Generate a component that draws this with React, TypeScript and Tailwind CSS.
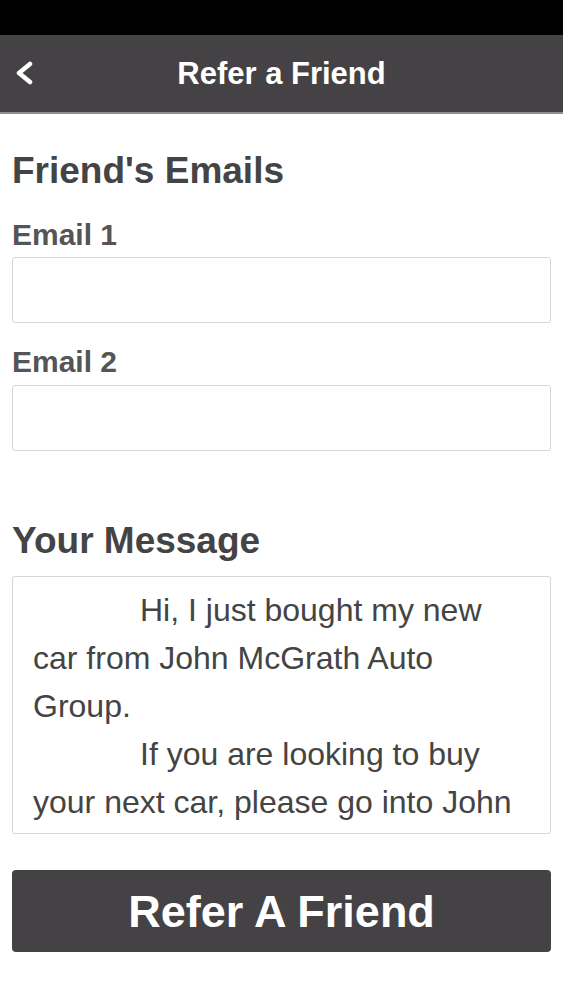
export default function App(): JSX.Element {
  return (
    <main className="w-[563px] h-[1000px] bg-white font-['Liberation_Sans',Arial,sans-serif] overflow-hidden">
      <div className="h-[35px] bg-black" />
      <header className="h-[79px] bg-[#444245] border-b-2 border-[#8e8d8f] flex items-center">
        <div className="w-[70px] pl-[15px] flex items-center">
          <svg width="20" height="26" viewBox="0 0 20 26" fill="none">
            <polyline points="15,3 4,12 15,21" stroke="white" strokeWidth="4.5" strokeLinecap="round" strokeLinejoin="round" />
          </svg>
        </div>
        <h1 className="flex-1 text-center text-white font-bold text-[31px] leading-none">Refer a Friend</h1>
        <div className="w-[70px]" />
      </header>
      <section className="px-3">
        <h2 className="mt-[35px] text-[37px] leading-[43px] font-bold text-[#444]">Friend's Emails</h2>
        <label className="block mt-[25px] text-[30px] leading-[35px] font-bold text-[#555]">Email 1</label>
        <div className="mt-[5px] h-[66px] border border-[#d6d6d6] rounded-[3px]" />
        <label className="block mt-[21px] text-[30px] leading-[35px] font-bold text-[#555]">Email 2</label>
        <div className="mt-[6px] h-[66px] border border-[#d6d6d6] rounded-[3px]" />
        <h2 className="mt-[68px] text-[37px] leading-[43px] font-bold text-[#444]">Your Message</h2>
        <div className="mt-[14px] h-[258px] border border-[#d6d6d6] rounded-[3px] overflow-hidden px-5 pt-[9px] text-[32px] leading-[48px] text-[#444]">
          <p className="indent-[107px]">Hi, I just bought my new car from John McGrath Auto Group.</p>
          <p className="indent-[107px]">If you are looking to buy your next car, please go into John</p>
        </div>
        <button className="mt-[36px] w-full h-[82px] bg-[#444245] rounded-[4px] text-white font-bold text-[45px] leading-none">
          Refer A Friend
        </button>
      </section>
    </main>
  );
}
